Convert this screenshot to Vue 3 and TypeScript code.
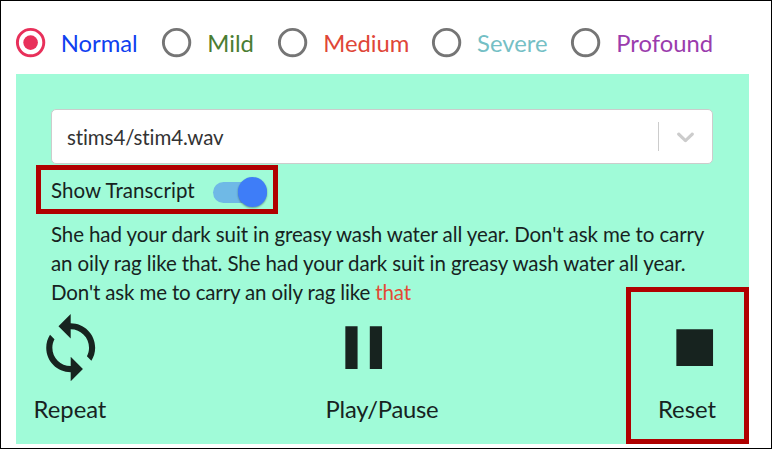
<script setup lang="ts">
import { ref } from 'vue'

interface Level {
  id: string
  label: string
}

const levels: Level[] = [
  { id: 'normal', label: 'Normal' },
  { id: 'mild', label: 'Mild' },
  { id: 'medium', label: 'Medium' },
  { id: 'severe', label: 'Severe' },
  { id: 'profound', label: 'Profound' },
]
const selected = ref('normal')
const showTranscript = ref(true)
const lines: string[] = [
  "She had your dark suit in greasy wash water all year. Don't ask me to carry",
  'an oily rag like that. She had your dark suit in greasy wash water all year.',
]
</script>

<template>
  <main class="page">
    <div class="levels" role="radiogroup">
      <div
        v-for="level in levels"
        :key="level.id"
        class="level"
        :class="[level.id, { checked: selected === level.id }]"
        role="radio"
        :aria-checked="selected === level.id"
        @click="selected = level.id"
      >
        <svg class="radio" viewBox="0 0 24 24">
          <circle class="ring" cx="12" cy="12" r="9" />
          <circle v-if="selected === level.id" class="dot" cx="12" cy="12" r="5" />
        </svg>
        <span class="level-label">{{ level.label }}</span>
      </div>
    </div>

    <section class="panel">
      <div class="select">
        <span class="value">stims4/stim4.wav</span>
        <span class="divider"></span>
        <svg class="chevron" viewBox="0 0 20 20">
          <path d="M4.516 7.548c0.436-0.446 1.043-0.481 1.576 0l3.908 3.747 3.908-3.747c0.533-0.481 1.141-0.446 1.574 0 0.436 0.445 0.408 1.197 0 1.615-0.406 0.418-4.695 4.502-4.695 4.502-0.217 0.223-0.502 0.335-0.787 0.335s-0.57-0.112-0.789-0.335c0 0-4.287-4.084-4.695-4.502s-0.436-1.17 0-1.615z" />
        </svg>
      </div>

      <div class="toggle-row">
        <span class="toggle-label">Show Transcript</span>
        <span class="switch" :class="{ on: showTranscript }" @click="showTranscript = !showTranscript">
          <span class="thumb"></span>
        </span>
      </div>

      <div class="transcript">
        <div v-for="line in lines" :key="line" class="line">{{ line }}</div>
        <div class="line last">Don't ask me to carry an oily rag like <span class="current">that</span></div>
      </div>

      <div class="controls">
        <div class="control repeat">
          <svg viewBox="0 0 24 24">
            <path d="M12 4V1L8 5l4 4V6c3.31 0 6 2.69 6 6 0 1.01-.25 1.97-.7 2.8l1.46 1.46C19.54 15.03 20 13.57 20 12c0-4.42-3.58-8-8-8zm0 14c-3.31 0-6-2.69-6-6 0-1.01.25-1.97.7-2.8L5.24 7.74C4.46 8.97 4 10.43 4 12c0 4.42 3.58 8 8 8v3l4-4-4-4v3z" />
          </svg>
          <span>Repeat</span>
        </div>
        <div class="control play">
          <svg viewBox="0 0 24 24"><path d="M6 19h4V5H6v14zm8-14v14h4V5h-4z" /></svg>
          <span>Play/Pause</span>
        </div>
        <div class="control reset">
          <svg viewBox="0 0 24 24"><path d="M6 6h12v12H6z" /></svg>
          <span>Reset</span>
        </div>
      </div>
    </section>
  </main>
</template>

<style>
body {
  margin: 0;
  background: #fff;
}
</style>

<style scoped>
.page {
  box-sizing: border-box;
  width: 772px;
  height: 449px;
  border: 1px solid #000;
  padding: 24px 22px 0 15px;
  overflow: hidden;
  font-family: Lato, "Liberation Sans", sans-serif;
  font-variant-ligatures: none;
  color: #17231f;
}
.levels {
  display: flex;
  height: 49px;
  margin-left: -3.3px;
}
.level {
  display: flex;
  align-items: center;
  height: 36px;
  cursor: pointer;
}
.radio {
  flex: none;
  width: 35.2px;
  height: 35.2px;
}
.ring {
  fill: none;
  stroke: #757575;
  stroke-width: 2;
}
.dot {
  fill: #e8305a;
}
.checked .ring {
  stroke: #e8305a;
}
.level-label {
  padding-left: 12.8px;
  font-size: 23.8px;
  line-height: 36px;
  white-space: nowrap;
}
.normal { width: 146.6px; color: #1040f0; }
.mild { width: 115.9px; color: #4b7d32; }
.medium { width: 153.9px; color: #df4638; }
.severe { width: 139.2px; color: #75bfc5; }
.profound { color: #9b3cad; }

.panel {
  box-sizing: border-box;
  width: 733px;
  height: 370px;
  padding: 35px 0 0 35px;
  background: #a0fbd8;
}
.select {
  box-sizing: border-box;
  display: flex;
  align-items: center;
  width: 662px;
  height: 55px;
  border: 1px solid #ccc;
  border-radius: 5px;
  background: #fff;
}
.value {
  flex: 1;
  padding-left: 15px;
  font-size: 20.5px;
  letter-spacing: -0.1px;
  color: #333;
}
.divider {
  width: 1px;
  height: 29px;
  background: #ccc;
}
.chevron {
  width: 29px;
  height: 29px;
  margin: 0 12px;
  fill: #ccc;
}
.toggle-row {
  box-sizing: border-box;
  display: flex;
  align-items: center;
  width: 242px;
  height: 49px;
  margin: 1px 0 0 -15px;
  padding-left: 10px;
  border: 5px solid #b00000;
}
.toggle-label {
  width: 162.4px;
  font-size: 20.5px;
  letter-spacing: 0.07px;
  white-space: nowrap;
}
.switch {
  display: flex;
  align-items: center;
  width: 54px;
  height: 21px;
  margin-top: 5px;
  border-radius: 11px;
  background: #9cb0b0;
  cursor: pointer;
}
.switch.on {
  justify-content: flex-end;
  background: #6fb9e6;
}
.thumb {
  width: 29.4px;
  height: 29.4px;
  border-radius: 50%;
  background: #3e7df8;
  box-shadow: 0 1px 2px rgba(0, 0, 0, 0.24), 0 1px 2px rgba(0, 0, 0, 0.14);
}
.transcript {
  box-sizing: border-box;
  height: 73px;
  padding-top: 6px;
}
.line {
  height: 29.2px;
  font-size: 20.5px;
  letter-spacing: -0.105px;
  line-height: 29.2px;
  white-space: nowrap;
}
.last {
  letter-spacing: -0.14px;
}
.current {
  color: #e34a35;
}
.controls {
  display: flex;
  justify-content: space-between;
  margin-left: -35px;
}
.control {
  box-sizing: border-box;
  display: flex;
  flex-direction: column;
  align-items: center;
  height: 157px;
  padding-top: 23.5px;
  font-size: 23.8px;
  cursor: pointer;
}
.control svg {
  width: 73.4px;
  height: 73.4px;
  fill: #17231f;
}
.control span {
  margin-top: 11.2px;
  line-height: 29px;
}
.repeat {
  width: 108px;
}
.repeat svg {
  margin-left: 1px;
}
.play {
  margin-left: 14px;
  letter-spacing: -0.25px;
}
.play svg {
  margin-right: 37px;
}
.reset {
  width: 123px;
  padding-top: 18.5px;
  border: 5px solid #b00000;
}
.reset svg {
  margin-left: 14px;
}
.reset span {
  margin-right: 1px;
}
</style>
